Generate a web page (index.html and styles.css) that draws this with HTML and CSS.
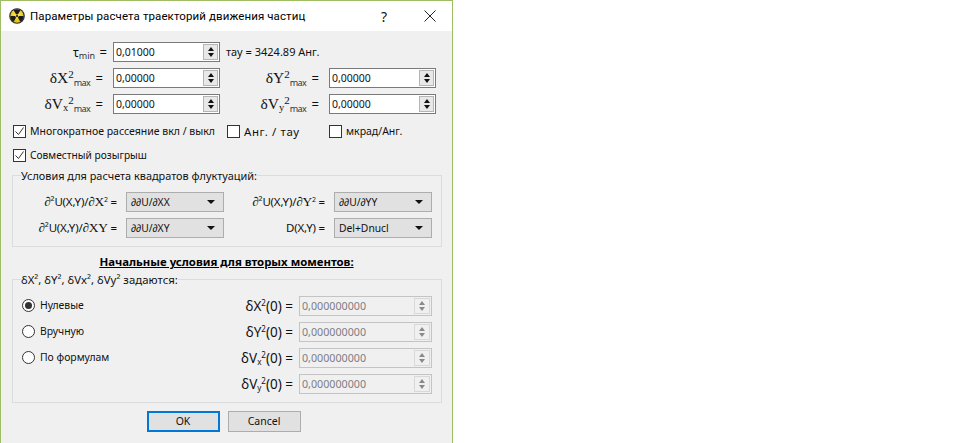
FILE: index.html
```html
<!DOCTYPE html>
<html lang="ru">
<head>
<meta charset="utf-8">
<title>Параметры расчета траекторий движения частиц</title>
<link rel="stylesheet" href="styles.css">
</head>
<body>
<div class="dialog">
  <header class="titlebar">
    <svg class="app-icon" width="16" height="16" viewBox="0 0 18 18">
      <defs><radialGradient id="y" cx="50%" cy="40%" r="60%"><stop offset="0" stop-color="#fff36a"/><stop offset="1" stop-color="#e6b800"/></radialGradient></defs>
      <circle cx="9" cy="9" r="8.8" fill="#2a2a2a"/>
      <circle cx="9" cy="9" r="7.5" fill="url(#y)"/>
      <path d="M9 9 L5.2 2.6 A7.5 7.5 0 0 1 12.8 2.6 Z M9 9 L16.5 9 A7.5 7.5 0 0 1 12.7 15.5 Z M9 9 L5.3 15.5 A7.5 7.5 0 0 1 1.5 9 Z" fill="#1c1c1c"/>
      <circle cx="9" cy="9" r="2" fill="#f4dc40"/>
      <circle cx="9" cy="9" r="1.2" fill="#1c1c1c"/>
    </svg>
    <span class="title">Параметры расчета траекторий движения частиц</span>
    <span class="help">?</span>
    <svg class="close" width="12" height="12" viewBox="0 0 12 12"><path d="M.5.5l11 11M11.5.5l-11 11" stroke="#222" fill="none"/></svg>
  </header>

  <main class="content">
    <div class="params">
      <div class="lbl"><span class="tau">τ<sub class="min">min</sub></span> =</div>
      <div class="spin"><span class="val">0,01000</span><span class="btns"><i class="up"></i><i class="down"></i></span></div>
      <span class="note">тау = 3424.89 Анг.</span>

      <div class="lbl short"><span class="sym">δX<sup>2</sup></span><sub class="low">max</sub> =</div>
      <div class="spin"><span class="val">0,00000</span><span class="btns"><i class="up"></i><i class="down"></i></span></div>
      <div class="lbl"><span class="sym">δY<sup>2</sup></span><sub class="low">max</sub> =</div>
      <div class="spin"><span class="val">0,00000</span><span class="btns"><i class="up"></i><i class="down"></i></span></div>

      <div class="lbl short"><span class="sym">δV<sub class="v">x</sub><sup>2</sup></span><sub class="low">max</sub> =</div>
      <div class="spin"><span class="val">0,00000</span><span class="btns"><i class="up"></i><i class="down"></i></span></div>
      <div class="lbl"><span class="sym">δV<sub class="v">y</sub><sup>2</sup></span><sub class="low">max</sub> =</div>
      <div class="spin"><span class="val">0,00000</span><span class="btns"><i class="up"></i><i class="down"></i></span></div>
    </div>

    <div class="checks">
      <span class="check c1"><i class="box on"><svg width="11" height="11" viewBox="0 0 11 11"><path d="M1.5 5.5l3 3 5-7" stroke="#333" fill="none"/></svg></i>Многократное рассеяние вкл / выкл</span>
      <span class="check c2"><i class="box"></i>Анг. / тау</span>
      <span class="check c3"><i class="box"></i>мкрад/Анг.</span>
    </div>
    <div class="checks second">
      <span class="check"><i class="box on"><svg width="11" height="11" viewBox="0 0 11 11"><path d="M1.5 5.5l3 3 5-7" stroke="#333" fill="none"/></svg></i>Совместный розыгрыш</span>
    </div>

    <fieldset class="group g1">
      <legend>Условия для расчета квадратов флуктуаций:</legend>
      <div class="combos">
        <div class="flbl"><em>∂</em>²U(X,Y)/<em>∂</em><b>X</b><sup>2</sup> =</div>
        <div class="combo">∂∂U/∂XX<i></i></div>
        <div class="flbl"><em>∂</em>²U(X,Y)/<em>∂</em><b>Y</b><sup>2</sup> =</div>
        <div class="combo">∂∂U/∂YY<i></i></div>
        <div class="flbl"><em>∂</em>²U(X,Y)/<em>∂</em><b>XY</b> =</div>
        <div class="combo">∂∂U/∂XY<i></i></div>
        <div class="flbl">D(X,Y) =</div>
        <div class="combo">Del+Dnucl<i></i></div>
      </div>
    </fieldset>

    <h2 class="heading">Начальные условия для вторых моментов:</h2>

    <fieldset class="group g2">
      <legend>δX², δY², δVx², δVy² задаются:</legend>
      <div class="moments">
        <span class="radio"><i class="dot on"></i>Нулевые</span>
        <div class="mlbl">δX<sup>2</sup>(0) =</div>
        <div class="spin off"><span class="val">0,000000000</span><span class="btns"><i class="up"></i><i class="down"></i></span></div>
        <span class="radio"><i class="dot"></i>Вручную</span>
        <div class="mlbl">δY<sup>2</sup>(0) =</div>
        <div class="spin off"><span class="val">0,000000000</span><span class="btns"><i class="up"></i><i class="down"></i></span></div>
        <span class="radio"><i class="dot"></i>По формулам</span>
        <div class="mlbl">δV<sub>x</sub><sup>2</sup>(0) =</div>
        <div class="spin off"><span class="val">0,000000000</span><span class="btns"><i class="up"></i><i class="down"></i></span></div>
        <span class="radio"></span>
        <div class="mlbl">δV<sub>y</sub><sup>2</sup>(0) =</div>
        <div class="spin off"><span class="val">0,000000000</span><span class="btns"><i class="up"></i><i class="down"></i></span></div>
      </div>
    </fieldset>

    <div class="actions">
      <button class="btn default" type="button">OK</button>
      <button class="btn" type="button">Cancel</button>
    </div>
  </main>
</div>
</body>
</html>
```

FILE: styles.css
```css
* { box-sizing: border-box; }
html, body { margin: 0; padding: 0; background: #fff; }
body { font: 11px/15px "Noto Sans", "Liberation Sans", sans-serif; color: #111; overflow: hidden; }

.dialog {
  width: 453px;
  height: 443px;
  border: 1px solid #9fbd62;
  border-bottom: 0;
  background: #f0f0f0;
  display: flex;
  flex-direction: column;
}
.titlebar {
  height: 30px;
  flex: none;
  background: #fff;
  display: flex;
  align-items: center;
  padding-left: 8px;
}
.app-icon { flex: none; }
.title { margin-left: 5px; font: 11.5px/16px Roboto, "Noto Sans", sans-serif; flex: 1; color: #000; letter-spacing: .1px; }
.help { font-size: 14px; width: 20px; margin-right: 30px; text-align: center; }
.close { margin-right: 16px; }

.content { padding: 11px 0 0 0; }

.params {
  display: grid;
  grid-template-columns: 112px 107px 109px 107px;
  grid-auto-rows: 20px;
  row-gap: 6px;
}
.lbl { text-align: right; white-space: pre; font-size: 13px; padding-right: 6px; line-height: 20px; }
.lbl.short { padding-right: 10px; }
.spin + .lbl { padding-right: 10px; }
.sym { font-family: "Liberation Serif", serif; font-size: 15.5px; }
.sym sup { font-size: 11px; line-height: 0; vertical-align: 5px; }
.sym .v { font-size: 10.5px; line-height: 0; vertical-align: -2px; margin-right: 0; }
.tau { font-size: 12px; }
.min { font-size: 9px; line-height: 0; vertical-align: -2px; margin-right: 1px; color: #333; }
.low { font-size: 9px; line-height: 0; vertical-align: -3px; margin-right: 2px; color: #333; letter-spacing: -.6px; }
.note { grid-column: 3 / 5; font-size: 11px; padding-left: 6px; line-height: 20px; }

.spin {
  border: 1px solid #7a7a7a;
  background: #fff;
  display: flex;
  align-items: center;
  justify-content: space-between;
  height: 20px;
  padding-left: 2px;
  padding-right: 1px;
}
.val { font-size: 10.5px; }
.btns {
  width: 15px;
  height: 16px;
  background: #e8e8e8;
  border: 1px solid #b5b5b5;
  display: flex;
  flex-direction: column;
  align-items: center;
  justify-content: center;
  gap: 2px;
}
.btns i { display: block; width: 0; height: 0; border-left: 3.5px solid transparent; border-right: 3.5px solid transparent; }
.btns .up { border-bottom: 4px solid #111; }
.btns .down { border-top: 4px solid #111; }

.spin.off { border-color: #c4c4c4; background: #f0f0f0; height: 20px; padding-right: 1px; }
.spin.off .val { color: #7d7d85; font-size: 10.7px; }
.spin.off .btns { background: #f0f0f0; border-color: #d8d8d8; width: 16px; }
.spin.off .up { border-bottom-color: #8a8a8a; }
.spin.off .down { border-top-color: #8a8a8a; }

.checks { display: flex; margin-top: 11px; height: 13px; align-items: center; }
.checks.second { margin-top: 11px; }
.check { display: flex; align-items: center; white-space: nowrap; font-size: 10.5px; }
.c1 { margin-left: 12px; width: 214px; }
.c2 { width: 102px; font-size: 11.5px; letter-spacing: .6px; }
.second .check { margin-left: 12px; font-size: 10.2px; }
.box {
  width: 13px; height: 13px; flex: none;
  border: 1px solid #333;
  background: #fff;
  margin-right: 4px;
  display: flex; align-items: center; justify-content: center;
}

.group {
  margin: 0 0 0 11px;
  width: 430px;
  padding: 0;
  border: 1px solid #dcdcdc;
  min-width: 0;
}
.group legend { padding: 0; margin-left: 8px; height: 15px; line-height: 15px; font-size: 10.9px; }
.g1 { margin-top: 6px; height: 79px; }
.combos {
  display: grid;
  grid-template-columns: 113px 98px 110px 98px;
  grid-auto-rows: 20px;
  row-gap: 6px;
  padding-top: 9px;
}
.flbl { text-align: right; padding-right: 9px; font-size: 11.5px; line-height: 20px; white-space: pre; letter-spacing: -.2px; }
.flbl em { font-family: "Liberation Serif", serif; font-size: 13px; }
.flbl b { font-family: "Liberation Serif", serif; font-weight: 400; font-size: 13.5px; }
.flbl sup { font-size: 7px; line-height: 0; vertical-align: 4px; }
.combo {
  background: #e1e1e1;
  border: 1px solid #adadad;
  padding-left: 4px;
  line-height: 18px;
  font-size: 10.3px;
  position: relative;
}
.combo i {
  position: absolute; right: 8px; top: 7px;
  width: 0; height: 0;
  border-left: 4px solid transparent;
  border-right: 4px solid transparent;
  border-top: 4px solid #111;
}

.heading { margin: 7px 0 3px; font-size: 11.4px; line-height: 15px; font-weight: 700; text-align: center; text-decoration: underline; color: #000; }

.g2 { height: 131px; }
.g2 legend { font-size: 11.4px; }
.moments {
  display: grid;
  grid-template-columns: 217px 69px 133px;
  grid-auto-rows: 20px;
  row-gap: 6px;
  padding-top: 9px;
}
.radio { display: flex; align-items: center; padding-left: 9px; font-size: 10.4px; margin-top: -1px; }
.dot {
  width: 13px; height: 13px; border-radius: 50%; flex: none;
  border: 1px solid #333; background: #fff; margin-right: 5px;
  display: flex; align-items: center; justify-content: center;
}
.dot.on::after { content: ""; width: 7px; height: 7px; border-radius: 50%; background: #333; }
.mlbl { text-align: right; white-space: pre; padding-right: 6px; font-size: 13.5px; line-height: 20px; }
.mlbl sup { font-size: 8px; line-height: 0; vertical-align: 5px; }
.mlbl sub { font-size: 8px; line-height: 0; vertical-align: -2px; }

.actions { display: flex; justify-content: center; gap: 8px; margin-top: 8px; padding-right: 6px; }
.btn {
  width: 73px; height: 21px; padding: 0;
  background: #e1e1e1;
  border: 1px solid #adadad;
  font: 10.5px/15px "Noto Sans", "Liberation Sans", sans-serif;
  color: #111;
}
.btn.default { border: 2px solid #0078d7; }
```
